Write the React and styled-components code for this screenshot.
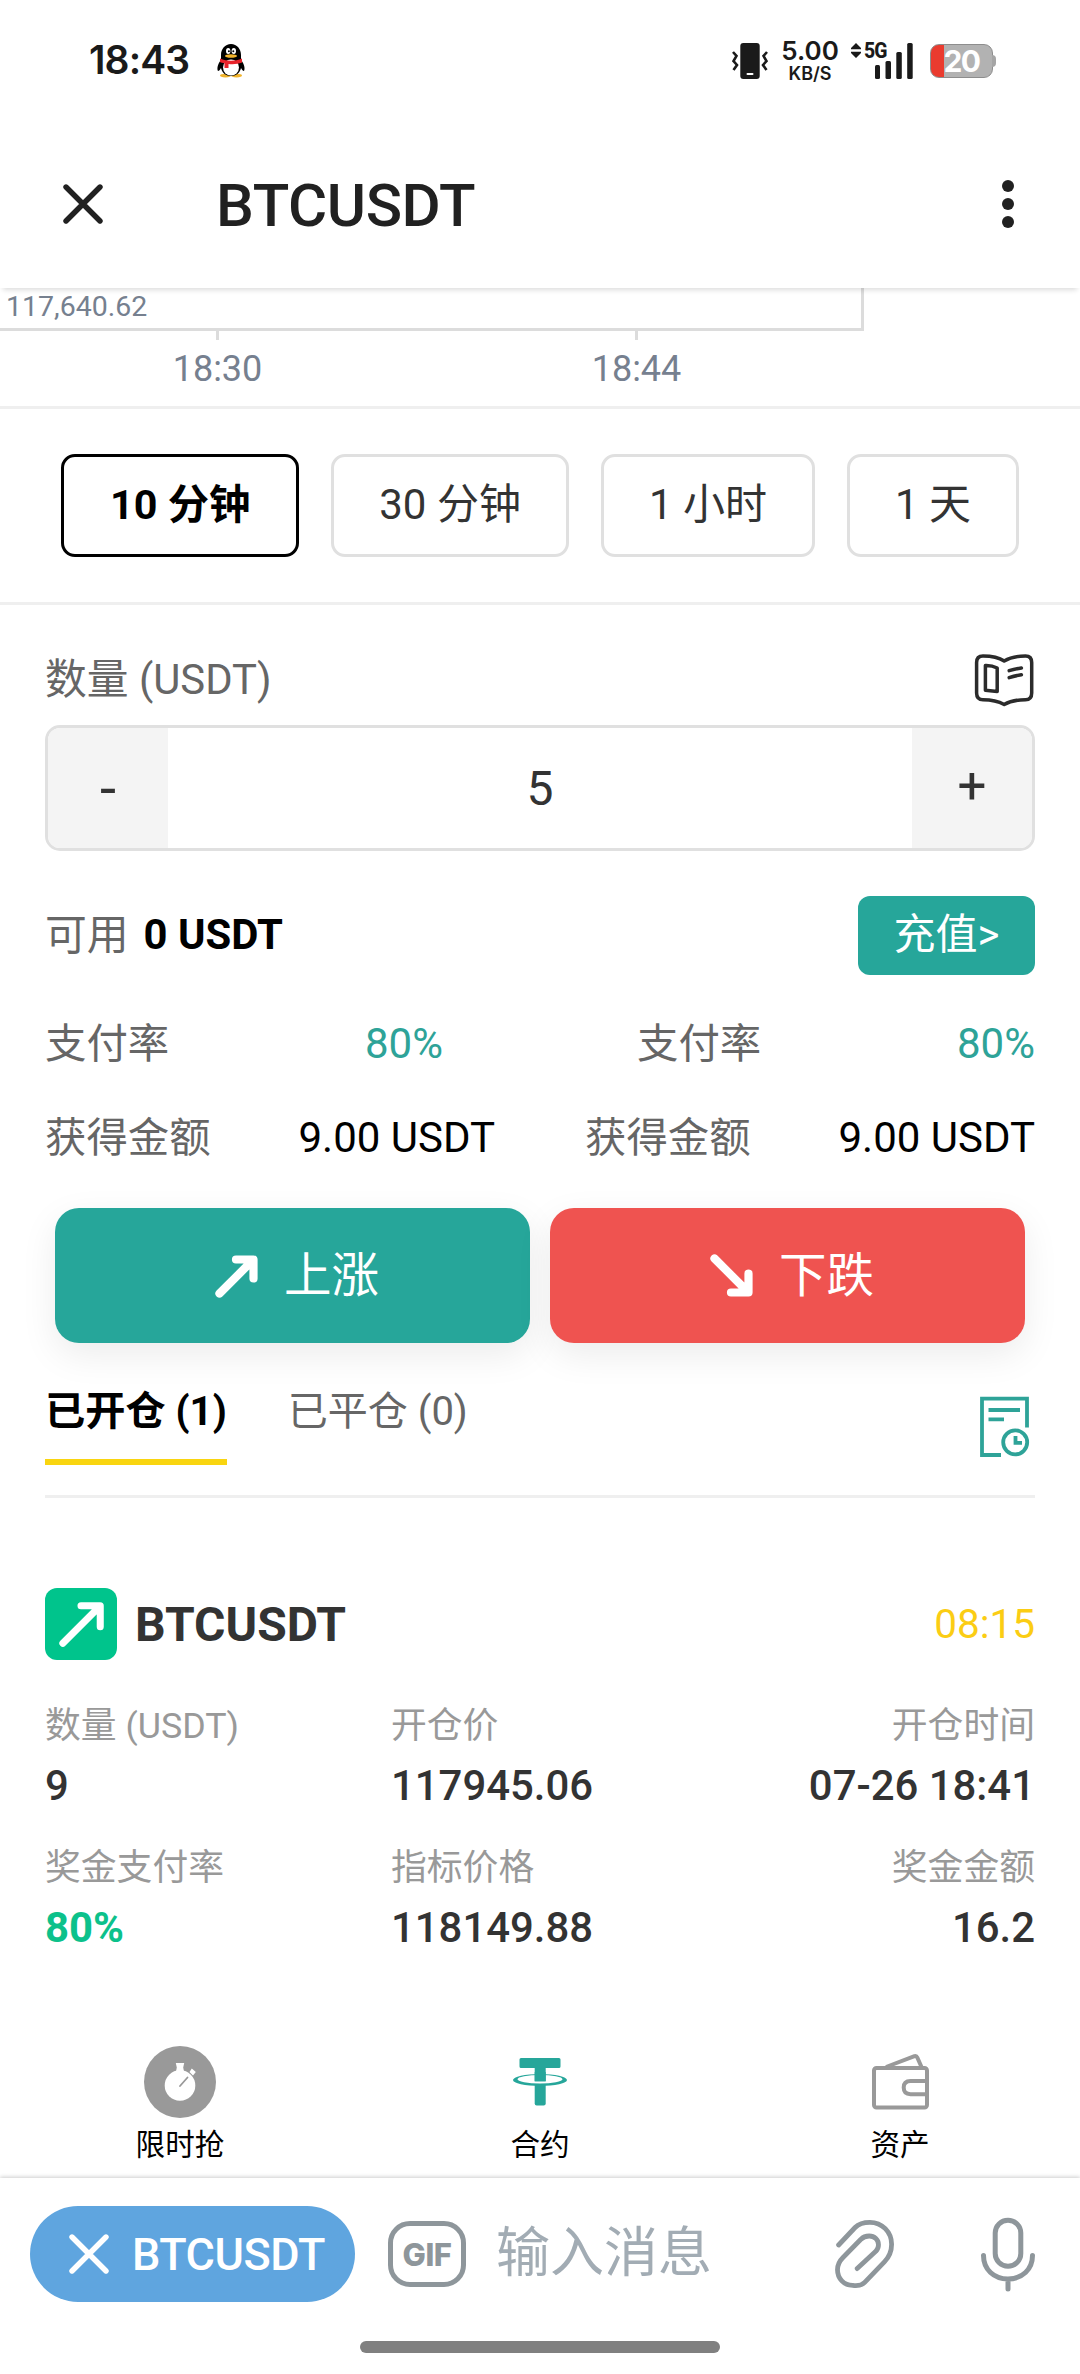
import React from 'react'
import styled, { createGlobalStyle } from 'styled-components'

const GlobalStyle = createGlobalStyle`
* {
  box-sizing: border-box;
}
body {
  margin: 0;
  background: #fff;
  font-family: Roboto, "Noto Sans CJK SC", sans-serif;
  color: #333;
}
button {
  font-family: inherit;
  padding: 0;
  margin: 0;
}
svg {
  display: block;
  flex-shrink: 0;
}
`;

const periods = ['10 分钟', '30 分钟', '1 小时', '1 天'];

const details = [
  { label: '数量 (USDT)', value: '9' },
  { label: '开仓价', value: '117945.06' },
  { label: '开仓时间', value: '07-26 18:41' },
  { label: '奖金支付率', value: '80%', up: true },
  { label: '指标价格', value: '118149.88' },
  { label: '奖金金额', value: '16.2' },
];

const PenguinIcon = () => (
  <svg width="28" height="34" viewBox="0 0 28 34">
    <ellipse cx="8.5" cy="31.6" rx="5.5" ry="1.8" fill="#f0b32c" />
    <ellipse cx="19.5" cy="31.6" rx="5.5" ry="1.8" fill="#f0b32c" />
    <path d="M4 16C0 21 0 25 1 27c1 0 2-1 3-3 1 5 5 8 10 8s9-3 10-8c1 2 2 3 3 3 1-2 1-6-3-11V11C24 5 20 0 14 0S4 5 4 11z" fill="#000" />
    <ellipse cx="14" cy="23.5" rx="8" ry="8" fill="#fff" />
    <ellipse cx="11.2" cy="7" rx="2.2" ry="3" fill="#fff" />
    <ellipse cx="16.8" cy="7" rx="2.2" ry="3" fill="#fff" />
    <circle cx="11.9" cy="7.3" r="1" fill="#000" />
    <circle cx="16.3" cy="7.3" r="1" fill="#000" />
    <ellipse cx="14" cy="12" rx="6" ry="1.8" fill="#f0b32c" />
    <path d="M3 14.5c7 3 15 3 22 0v4c-4 1.7-9 2-13.5 1.5V24H7.5v-4.8C5.5 19 4 18.7 3 18z" fill="#e8232a" />
  </svg>
);

const VibrateIcon = () => (
  <svg width="38" height="38" viewBox="0 0 38 38">
    <rect x="9.3" y="1" width="19.4" height="36" rx="3" fill="#1a1a1a" />
    <rect x="15.5" y="31" width="7" height="2" rx="1" fill="#fff" />
    <path d="M2 10l3.5 4L2.5 19l3.5 4-3.5 5M36 10l-3.5 4 3 5-3.5 4 3.5 5" fill="none" stroke="#1a1a1a" strokeWidth="2.6" />
  </svg>
);

const SignalBars = () => (
  <svg width="38" height="36" viewBox="0 0 38 36">
    <rect x="0" y="22" width="5" height="14" rx="1.5" fill="#1a1a1a" />
    <rect x="10.5" y="18" width="5.5" height="18" rx="1.5" fill="#1a1a1a" />
    <rect x="21.3" y="9" width="5.5" height="27" rx="1.5" fill="#1a1a1a" />
    <rect x="32.2" y="0" width="5.5" height="36" rx="1.5" fill="#1a1a1a" />
  </svg>
);

const DataArrows = () => (
  <svg width="10" height="15" viewBox="0 0 10 15">
    <path d="M5 0l5 5v1.3H0V5zM5 15l5-5V8.7H0V10z" fill="#1a1a1a" />
  </svg>
);

const CloseIcon = ({ size, width }) => (
  <svg width={size} height={size} viewBox="0 0 40 40">
    <path d="M3 3l34 34M37 3L3 37" fill="none" stroke="currentColor" strokeWidth={width} strokeLinecap="round" />
  </svg>
);

const MoreIcon = () => (
  <svg width="12" height="48" viewBox="0 0 12 48">
    <circle cx="6" cy="6" r="6" fill="#212121" />
    <circle cx="6" cy="24" r="6" fill="#212121" />
    <circle cx="6" cy="42" r="6" fill="#212121" />
  </svg>
);

const BookIcon = () => (
  <svg width="63" height="60" viewBox="0 0 63 60" fill="none" stroke="#2b2b2b" strokeWidth="3.5" strokeLinejoin="round" strokeLinecap="round">
    <path d="M32.2 12C27 8.5 18 7 11 7Q4.6 7 4.6 13.5V44Q4.6 50.7 11 50.7C18 50.7 26 52 32.2 55.5C38 52 46 50.7 53.5 50.7Q59.7 50.7 59.7 44V13.5Q59.7 7 53.5 7C46 7 38 8.5 32.2 12Z" />
    <path d="M13.4 16.5Q20 16.3 25.2 19V42.5L13.4 41.3Z" />
    <path d="M37.2 21.7Q43 19.8 49.4 19M37.2 28.7Q43 26.7 49.4 25.8" />
  </svg>
);

const ArrowIcon = ({ size, width, down }) => (
  <svg width={size} height={size} viewBox="0 0 60 60">
    <path
      d="M13.5 47.5L46 15M30 13.5H47.5V32.5"
      transform={down ? 'matrix(1 0 0 -1 0 60)' : undefined}
      fill="none"
      stroke="#fff"
      strokeWidth={width}
      strokeLinecap="round"
      strokeLinejoin="round"
    />
  </svg>
);

const HistoryIcon = () => (
  <svg width="59" height="72" viewBox="0 0 59 72" fill="none" stroke="#2ea398" strokeWidth="3.8">
    <path d="M25 64H6V7.7H51V36.5" />
    <path d="M12.5 19H44M12.5 28.3H28" />
    <circle cx="39.2" cy="51.3" r="12" />
    <path d="M39.5 45V51.8H46" />
  </svg>
);

const StopwatchIcon = () => (
  <svg width="72" height="72" viewBox="0 0 72 72">
    <circle cx="36" cy="36" r="36" fill="#999" />
    <circle cx="36" cy="39.5" r="15.3" fill="#fff" />
    <path d="M31.8 17h8.4l-1 4.5 1 5h-8.4l1-5zM45.5 26l2.3-3.5 4 3.5-2.8 3.5z" fill="#fff" />
    <path d="M36 40l7.5-8.5" stroke="#999" strokeWidth="1.8" strokeLinecap="round" />
  </svg>
);

const TetherIcon = () => (
  <svg width="72" height="72" viewBox="0 0 72 72">
    <path d="M17 12h38q1.5 0 1.5 1.5v7q0 1.5-1.5 1.5H41.7v13.2H30.7V22H17q-1.5 0-1.5-1.5v-7q0-1.5 1.5-1.5z" fill="#26a69a" />
    <path
      d="M9 34a27 6 0 1 0 54 0a27 6 0 1 0-54 0zM13.5 33.3a22.5 4.2 0 1 1 45 0a22.5 4.2 0 1 1-45 0z"
      fill="#26a69a"
      fillRule="evenodd"
    />
    <rect x="30.7" y="26" width="11" height="9.3" fill="#26a69a" />
    <path d="M30.7 38.5h11v19q0 2-2 2h-7q-2 0-2-2z" fill="#26a69a" />
  </svg>
);

const WalletIcon = () => (
  <svg width="72" height="72" viewBox="0 0 72 72" fill="none" stroke="#999" strokeWidth="4" strokeLinejoin="round">
    <rect x="10" y="22" width="53" height="39.5" rx="2.5" />
    <path d="M22 21L50.5 10.2Q52.5 9.7 53.3 11.5L57.5 21" />
    <path d="M63 35H46.5q-6.8 0-6.8 6.6t6.8 6.6H63" />
  </svg>
);

const ClipIcon = () => (
  <svg width="66" height="76" viewBox="0 0 66 76" fill="none" stroke="#8e969b" strokeWidth="4.8" strokeLinecap="round" strokeLinejoin="round">
    <path d="M6.6 29L23.1 11.5C27 7.5 32 6.3 37.9 6.3C50 6.3 59.6 16 59.6 28.3C59.6 35 57 41.2 52.4 45.9L32.7 66.3C29 70 25.5 70 20.7 69.3C12 69.3 5.5 62.5 5.5 53.7C5.5 49 7.5 45 11 41.5L28.9 23.3C31 21 34 20 37.2 20C42.5 20 46.5 23.8 46.5 28.7C46.5 31.5 45.5 33.5 43.8 35.3L25.2 52.6" />
  </svg>
);

const MicIcon = () => (
  <svg width="60" height="78" viewBox="0 0 60 78" fill="none" stroke="#8e969b" strokeWidth="5" strokeLinecap="round">
    <rect x="17.2" y="5.2" width="25.6" height="46" rx="12.8" />
    <path d="M5.5 40.5C5.5 54.5 16 64 30 64S54.5 54.5 54.5 40.5M30 65V74" />
  </svg>
);

const App = () => {
  return (
    <Page>
      <GlobalStyle />
      <StatusBar>
        <Clock>18:43</Clock>
        <PenguinIcon />
        <StatusRight>
          <VibrateIcon />
          <Speed>
            <b>5.00</b>
            <span>KB/S</span>
          </Speed>
          <Network>
            <NetworkType>
              <DataArrows />
              <span>5G</span>
            </NetworkType>
            <SignalBars />
          </Network>
          <Battery>
            <span>20</span>
          </Battery>
        </StatusRight>
      </StatusBar>

      <Header>
        <CloseIcon size={40} width={5.4} />
        <Title>BTCUSDT</Title>
        <MoreIcon />
      </Header>

      <Chart>
        <Plot>117,640.62</Plot>
        <TimeAxis>
          <Tick>18:30</Tick>
          <Tick>18:44</Tick>
        </TimeAxis>
      </Chart>

      <Periods>
        {periods.map((period, i) => (
          <Period key={period} $active={i === 0}>{period}</Period>
        ))}
      </Periods>

      <Content>
        <LabelRow>
          <Muted>数量 (USDT)</Muted>
          <BookIcon />
        </LabelRow>
        <Stepper>
          <StepButton $size="58px">-</StepButton>
          <Amount>5</Amount>
          <StepButton $size="51px" $lift="4px">+</StepButton>
        </Stepper>

        <BalanceRow>
          <Muted>可用</Muted>
          <Balance>0 USDT</Balance>
          <Deposit>充值&gt;</Deposit>
        </BalanceRow>

        <Payouts>
          <Payout $width="398px"><Muted>支付率</Muted><Rate>80%</Rate></Payout>
          <Payout $width="398px"><Muted>支付率</Muted><Rate>80%</Rate></Payout>
        </Payouts>
        <Payouts>
          <Payout $width="450px"><Muted>获得金额</Muted><Gain>9.00 USDT</Gain></Payout>
          <Payout $width="450px"><Muted>获得金额</Muted><Gain>9.00 USDT</Gain></Payout>
        </Payouts>

        <Actions>
          <Action $color="#26a69a"><ArrowIcon size={60} width={8.2} />上涨</Action>
          <Action $color="#ef5350"><ArrowIcon size={60} width={8.2} down />下跌</Action>
        </Actions>

        <Tabs>
          <Tab $active>已开仓 (1)</Tab>
          <Tab>已平仓 (0)</Tab>
          <HistoryIcon />
        </Tabs>

        <Position>
          <PositionHead>
            <Direction><ArrowIcon size={66} width={6.4} /></Direction>
            <Symbol>BTCUSDT</Symbol>
            <Countdown>08:15</Countdown>
          </PositionHead>
          <Details>
            {details.map((item) => (
              <Detail key={item.label}>
                <dt>{item.label}</dt>
                <Value $up={item.up}>{item.value}</Value>
              </Detail>
            ))}
          </Details>
        </Position>
      </Content>

      <Nav>
        <NavItem><StopwatchIcon /><span>限时抢</span></NavItem>
        <NavItem><TetherIcon /><span>合约</span></NavItem>
        <NavItem><WalletIcon /><span>资产</span></NavItem>
      </Nav>

      <Composer>
        <InputRow>
          <BotPill>
            <CloseIcon size={40} width={5.4} />
            <span>BTCUSDT</span>
          </BotPill>
          <Gif>GIF</Gif>
          <Placeholder>输入消息</Placeholder>
          <ClipIcon />
          <MicIcon />
        </InputRow>
        <HomeBar />
      </Composer>
    </Page>
  )
}

const Page = styled.div`
width: 1080px;
height: 2374px;
display: flex;
flex-direction: column;
overflow: hidden;
background: #fff;
`;
const StatusBar = styled.div`
height: 120px;
display: flex;
align-items: center;
padding: 2px 84px 0 89px;
color: #1a1a1a;
font-family: Inter, Roboto, sans-serif;
`;
const Clock = styled.span`
width: 128px;
font-size: 39px;
font-weight: 600;
line-height: 46px;
padding-bottom: 2px;
letter-spacing: -0.9px;
`;
const StatusRight = styled.div`
margin-left: auto;
display: flex;
align-items: center;
height: 40px;
`;
const Speed = styled.div`
display: flex;
flex-direction: column;
align-items: center;
justify-content: space-between;
width: 60px;
height: 42px;
margin: 0 11px;
b {
  font-size: 26px;
  line-height: 22px;
  font-weight: 600;
}
span {
  font-size: 18px;
  line-height: 17px;
  font-weight: 600;
}
`;
const Network = styled.div`
display: flex;
width: 62px;
height: 36px;
margin-right: 17px;
`;
const NetworkType = styled.div`
display: flex;
gap: 3px;
width: 24px;
height: 16px;
flex-shrink: 0;
span {
  font-family: Roboto, sans-serif;
  font-size: 22px;
  line-height: 16px;
  font-weight: 800;
  letter-spacing: -1px;
  transform: scaleX(0.88);
  transform-origin: left;
}
`;
const Battery = styled.div`
position: relative;
display: flex;
align-items: center;
justify-content: center;
width: 63px;
height: 34px;
margin-right: 3px;
border: 1px solid #8d8d8d;
border-radius: 9px;
background: linear-gradient(90deg, #ea3b2f 13px, #b2b2b2 13px);
color: #fff;
font-size: 30px;
font-weight: 700;
letter-spacing: -1.5px;
&:after {
  content: "";
  position: absolute;
  right: -4px;
  top: 10px;
  width: 4px;
  height: 12px;
  border-radius: 0 4px 4px 0;
  background: #a5a5a5;
}
`;
const Header = styled.header`
position: relative;
height: 168px;
flex-shrink: 0;
display: flex;
align-items: center;
padding: 0 66px 0 63px;
color: #212121;
background: #fff;
box-shadow: 0 5px 5px -3px rgba(0, 0, 0, 0.14);
`;
const Title = styled.h1`
flex: 1;
margin: 4px 0 0 113px;
font-size: 60px;
line-height: 72px;
font-weight: 500;
letter-spacing: -0.4px;
`;
const Chart = styled.section`
height: 121px;
flex-shrink: 0;
border-bottom: 3px solid #efefef;
color: #76808f;
`;
const Plot = styled.div`
width: 864px;
height: 43px;
padding-left: 6px;
border-right: 3px solid #dcdcdc;
border-bottom: 3px solid #dcdcdc;
font-size: 28.5px;
line-height: 37px;
`;
const TimeAxis = styled.div`
display: flex;
padding-left: 8px;
`;
const Tick = styled.div`
display: flex;
flex-direction: column;
align-items: center;
width: 419px;
font-size: 36px;
line-height: 46px;
&:before {
  content: "";
  width: 3px;
  height: 9px;
  margin-bottom: 6px;
  background: #dcdcdc;
}
`;
const Periods = styled.div`
height: 196px;
flex-shrink: 0;
display: flex;
align-items: center;
justify-content: space-around;
padding: 0 45px;
border-bottom: 3px solid #efefef;
`;
const Period = styled.button`
height: 103px;
padding: 0 ${props => props.$active ? '46px' : '45px'} 2px;
border: 3px solid ${props => props.$active ? '#000' : '#e0e0e0'};
border-radius: 14px;
background: #fff;
color: ${props => props.$active ? '#000' : '#333'};
font-size: ${props => props.$active ? '41.3px' : '42px'};
line-height: 60px;
font-weight: ${props => props.$active ? 700 : 400};
`;
const Content = styled.main`
flex: 1;
padding: 44px 45px 0;
`;
const Muted = styled.span`
color: #666;
`;
const LabelRow = styled.div`
display: flex;
align-items: center;
justify-content: space-between;
height: 60px;
font-size: 41.8px;
line-height: 60px;
${Muted} {
  padding-top: 2px;
}
`;
const Stepper = styled.div`
display: flex;
height: 126px;
margin-top: 16px;
border: 3px solid #e0e0e0;
border-radius: 15px;
overflow: hidden;
`;
const StepButton = styled.button`
width: 120px;
padding-bottom: ${props => props.$lift || 0};
border: none;
background: #f4f4f4;
color: #333;
font-size: ${props => props.$size};
line-height: 60px;
`;
const Amount = styled.div`
flex: 1;
text-align: center;
font-size: 48px;
line-height: 121px;
`;
const BalanceRow = styled.div`
display: flex;
align-items: center;
height: 79px;
margin-top: 45px;
font-size: 41.8px;
line-height: 60px;
`;
const Balance = styled.span`
margin: 0 0 2px 15px;
color: #000;
font-weight: 700;
`;
const Deposit = styled.button`
height: 79px;
margin-left: auto;
padding: 0 35.5px 1px;
border: none;
border-radius: 12px;
background: #26a69a;
color: #fff;
font-size: 42px;
line-height: 60px;
`;
const Payouts = styled.div`
display: flex;
justify-content: space-between;
margin-top: 39px;
font-size: 42px;
line-height: 60px;
& + & {
  margin-top: 34px;
}
${Muted} {
  font-size: 41.4px;
}
`;
const Payout = styled.div`
display: flex;
justify-content: space-between;
width: ${props => props.$width};
`;
const Rate = styled.span`
color: #2ea398;
`;
const Gain = styled.span`
color: #000;
`;
const Actions = styled.div`
display: flex;
gap: 20px;
padding: 0 10px;
margin-top: 40px;
`;
const Action = styled.button`
flex: 1;
height: 135px;
display: flex;
align-items: center;
justify-content: center;
gap: 18px;
border: none;
border-radius: 24px;
background: ${props => props.$color};
box-shadow: 0 12px 36px rgba(0, 0, 0, 0.08);
color: #fff;
font-size: 47.5px;
line-height: 60px;
`;
const Tabs = styled.div`
display: flex;
align-items: flex-start;
margin-top: 40px;
padding-bottom: 30px;
border-bottom: 3px solid #efefef;
svg {
  margin: 8px 0 0 auto;
}
`;
const Tab = styled.div`
margin-right: 61px;
padding: 1px 0 19px;
border-bottom: 6px solid ${props => props.$active ? '#f9d510' : 'transparent'};
color: ${props => props.$active ? '#000' : '#666'};
font-size: ${props => props.$active ? '40.2px' : '40px'};
line-height: 56px;
font-weight: ${props => props.$active ? 700 : 400};
`;
const Position = styled.section`
margin-top: 90px;
`;
const PositionHead = styled.div`
display: flex;
align-items: center;
height: 72px;
`;
const Direction = styled.div`
display: flex;
align-items: center;
justify-content: center;
width: 72px;
height: 72px;
border-radius: 12px;
background: #00c48c;
`;
const Symbol = styled.span`
margin-left: 18px;
font-size: 48px;
font-weight: 700;
`;
const Countdown = styled.span`
margin-left: auto;
color: #fbcd14;
font-size: 40.5px;
`;
const Details = styled.dl`
display: grid;
grid-template-columns: repeat(3, 1fr);
gap: 25px 48px;
margin: 39px 0 0;
`;
const Detail = styled.div`
dt {
  margin-bottom: 3px;
  color: #999;
  font-size: 35.8px;
  line-height: 54px;
}
&:nth-child(3n) {
  text-align: right;
}
`;
const Value = styled.dd`
margin: 0;
color: ${props => props.$up ? '#0cc18b' : '#333'};
font-size: 41.9px;
line-height: 60px;
font-weight: ${props => props.$up ? 700 : 500};
`;
const Nav = styled.nav`
display: flex;
height: 132px;
flex-shrink: 0;
`;
const NavItem = styled.a`
flex: 1;
display: flex;
flex-direction: column;
align-items: center;
gap: 5px;
color: #000;
font-size: 29.6px;
line-height: 44px;
`;
const Composer = styled.footer`
position: relative;
height: 196px;
flex-shrink: 0;
padding-top: 28px;
background: #fff;
box-shadow: 0 -1px 4px rgba(0, 0, 0, 0.2);
`;
const InputRow = styled.div`
display: flex;
align-items: center;
height: 96px;
padding: 0 42px 0 30px;
`;
const BotPill = styled.div`
display: flex;
align-items: center;
width: 325px;
height: 96px;
padding-left: 39px;
border-radius: 48px;
background: #5fa5df;
color: #fff;
span {
  margin-left: 23px;
  font-size: 45px;
  font-weight: 500;
  letter-spacing: -0.5px;
}
`;
const Gif = styled.div`
display: flex;
align-items: center;
justify-content: center;
width: 78px;
height: 66px;
margin-left: 33px;
border: 5px solid #8e969b;
border-radius: 22px;
color: #8e969b;
font-family: Inter, sans-serif;
font-size: 31px;
font-weight: 800;
letter-spacing: -0.5px;
`;
const Placeholder = styled.span`
flex: 1;
margin-left: 30px;
color: #a2acb4;
font-size: 54px;
line-height: 96px;
& + svg {
  margin-right: 80px;
}
`;
const HomeBar = styled.div`
width: 360px;
height: 12px;
margin: 39px auto 0;
border-radius: 6px;
background: #808080;
`;

export default App;
